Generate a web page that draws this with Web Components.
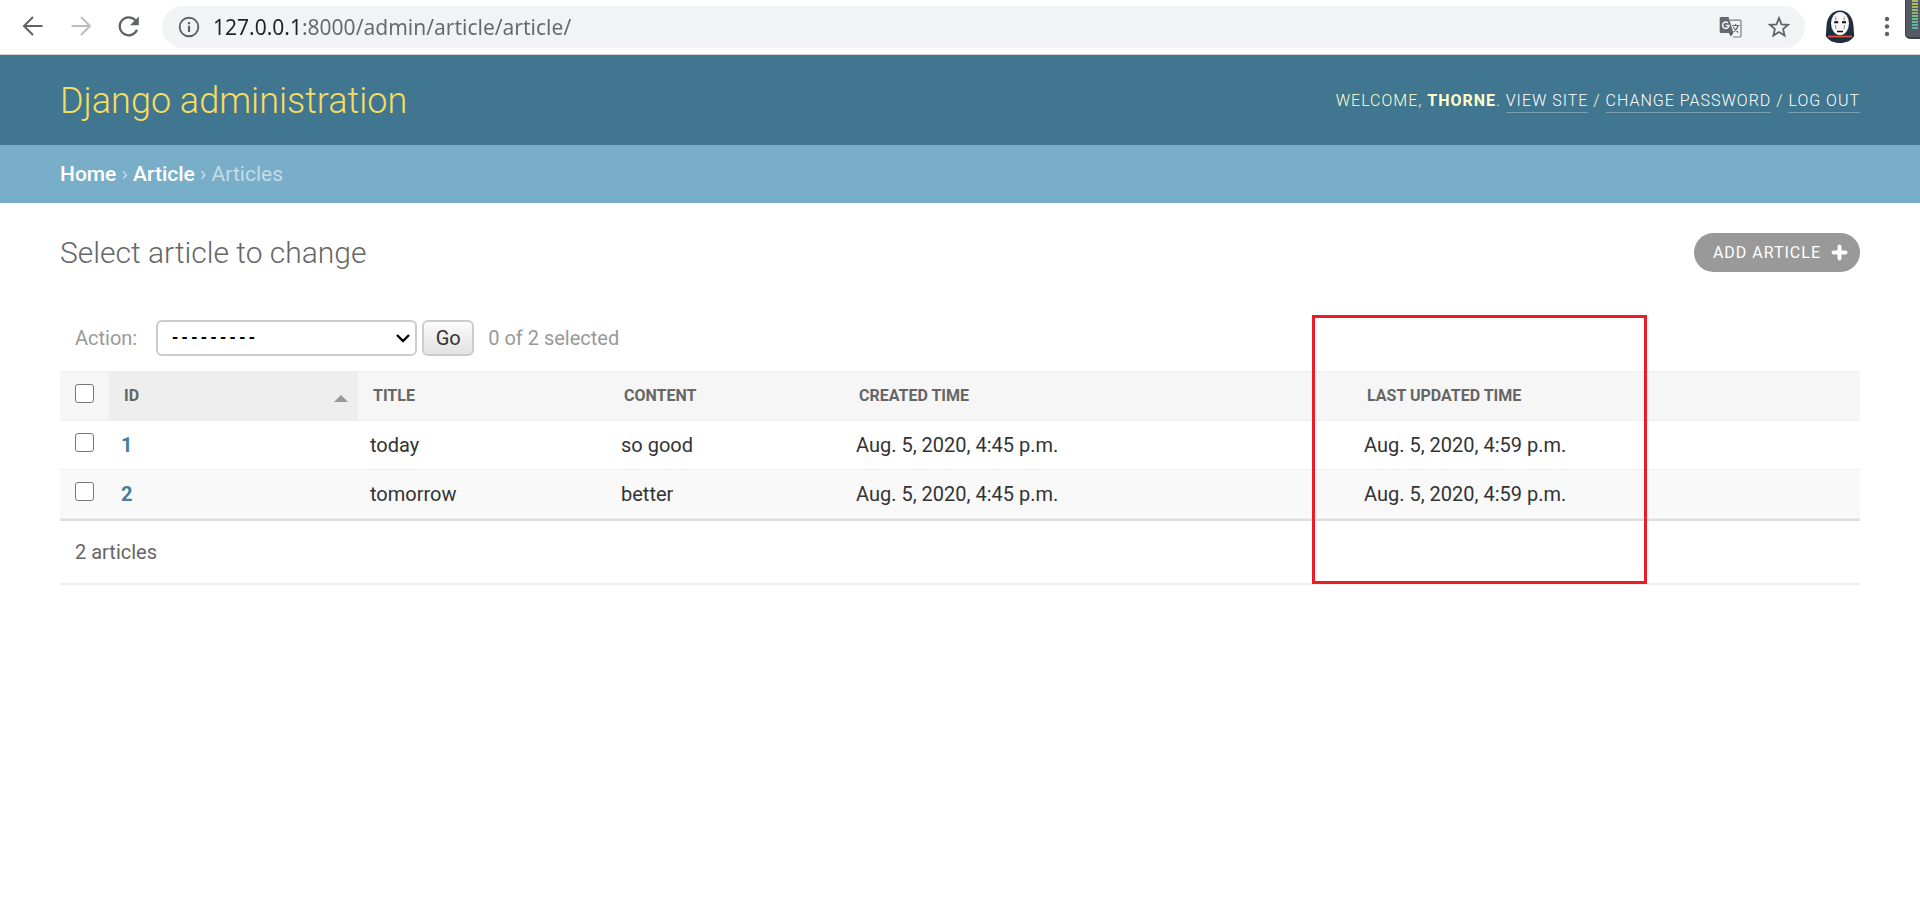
<!DOCTYPE html>
<html lang="en">
<head>
<meta charset="utf-8">
<title>Select article to change | Django site admin</title>
<style>
  body { margin: 0; background: #fff; color: #333; font-family: Roboto, "Liberation Sans", sans-serif; }
</style>
</head>
<body>
<browser-bar></browser-bar>
<admin-header user="thorne">Django administration</admin-header>
<admin-breadcrumbs></admin-breadcrumbs>
<admin-content>
  <span slot="title">Select article to change</span>
  <add-button slot="tools">Add article</add-button>
  <change-list></change-list>
</admin-content>

<script>
class BaseElement extends HTMLElement {
  connectedCallback() {
    if (this.shadowRoot) return;
    this.attachShadow({ mode: 'open' }).innerHTML = this.render();
  }
}

customElements.define('browser-bar', class extends BaseElement {
  render() {
    return `
<style>
  :host { display: flex; align-items: center; height: 54px; border-bottom: 1px solid #d3d3d6; background: #fff; overflow: hidden; }
  button { border: 0; padding: 0; background: none; display: block; width: 24px; height: 24px; flex: none; }
  svg { display: block; }
  nav { display: flex; gap: 24px; padding: 0 21px; }
  .address { flex: 1; display: flex; align-items: center; height: 42px; border-radius: 21px; background: #f1f3f4; padding: 0 14px 0 15px; box-sizing: border-box; gap: 12px; }
  input { flex: 1; min-width: 0; border: 0; padding: 0; height: 32px; outline: 0; font: 21px/32px "Noto Sans", "Open Sans", sans-serif; -webkit-text-fill-color: transparent; background: linear-gradient(90deg, #202124 90px, #65686c 90px); -webkit-background-clip: text; background-clip: text; }
  .actions { display: flex; gap: 24px; }
  .end { display: flex; align-items: center; align-self: stretch; padding-left: 20px; }
  .end button { width: 30px; height: 34px; }
  .end .menu { width: 8px; height: 24px; margin-left: 28px; }
  .meter { align-self: flex-start; margin-left: 14px; }
</style>
<nav aria-label="Browser">
  <button aria-label="Back"><svg width="24" height="24" viewBox="0 0 24 24" fill="none" stroke="#5f6368" stroke-width="2"><path d="M21.500 11H3.500M12 2L3 11l9 9"/></svg></button>
  <button aria-label="Forward" disabled><svg width="24" height="24" viewBox="0 0 24 24" fill="none" stroke="#babcbe" stroke-width="2"><path d="M2.500 11H20.500M12 2l9 9-9 9"/></svg></button>
  <button aria-label="Reload"><svg width="24" height="24" viewBox="0 0 24 24"><path d="M20 14.800A9 9 0 1 1 18.300 5.200" fill="none" stroke="#5f6368" stroke-width="2.200"/><path d="M21.800 1.500v8.800h-8.800z" fill="#5f6368"/></svg></button>
</nav>
<div class="address">
  <svg width="24" height="24" viewBox="0 0 24 24"><circle cx="12" cy="12" r="9.300" fill="none" stroke="#5f6368" stroke-width="1.900"/><path d="M10.900 10.700h2.200v6.300h-2.200zM10.900 7h2.200v2.300h-2.200z" fill="#5f6368"/></svg>
  <input type="text" aria-label="Address" value="127.0.0.1:8000/admin/article/article/">
  <div class="actions">
    <button aria-label="Translate"><svg width="24" height="24" viewBox="0 0 24 24"><path d="M11 5.200h9.700a1.300 1.300 0 0 1 1.300 1.300v14.200a1.300 1.300 0 0 1-1.300 1.300H14" fill="none" stroke="#7b7e82" stroke-width="1.200"/><path d="M2 2h7.500l1.300 4 3.600 12H2a1.300 1.300 0 0 1-1.300-1.300V3.300A1.300 1.300 0 0 1 2 2z" fill="#66696d"/><path d="M10 18h4.400l-2.600 3.500z" fill="#54575b"/><path d="M9 7.900a3.200 3.200 0 1 0 1 2.600H6.800" fill="none" stroke="#f1f3f4" stroke-width="1.500"/><path d="M13 10.500h7.500M16.600 9v1.500M19 10.500c-.600 3-2.500 5.200-4.500 6.500M14.300 12c1.200 2.600 3 4.200 5 5.500" fill="none" stroke="#66696d" stroke-width="1.200"/></svg></button>
    <button aria-label="Bookmark"><svg width="24" height="24" viewBox="0 0 24 24" fill="none" stroke="#5f6368" stroke-width="1.800"><path d="M12 3.200l2.500 6.100 6.600.500-5 4.300 1.500 6.400L12 17.100l-5.600 3.400 1.500-6.400-5-4.300 6.600-.500z"/></svg></button>
  </div>
</div>
<div class="end">
  <button aria-label="Profile"><svg width="30" height="34" viewBox="0 0 30 34"><path d="M15 .500C7 .500 2 7 1.500 16L.800 26C4 31 9 33 15 33s11-2 14.200-7l-.700-10C28 7 23 .500 15 .500z" fill="#202c40"/><path d="M3 26.500h24" stroke="#e8583e" stroke-width="1.600"/><ellipse cx="15" cy="13.500" rx="9" ry="11.500" fill="#f7f5f5"/><path d="M9.200 12.200h4M17 12.200h4" stroke="#111" stroke-width="2"/><path d="M12 21.500h6" stroke="#111" stroke-width="1.500"/><path d="M10.500 6.500l.500 4M19.500 6.500l-.500 4M10.500 15l.500 4M19.500 15l-.500 4" stroke="#aaa6b0" stroke-width="1.300"/></svg></button>
  <button class="menu" aria-label="Menu"><svg width="8" height="24" viewBox="0 0 8 24" fill="#5f6368"><circle cx="4" cy="4" r="2.200"/><circle cx="4" cy="11.500" r="2.200"/><circle cx="4" cy="19" r="2.200"/></svg></button>
  <svg class="meter" width="15" height="40" viewBox="0 0 15 40"><path d="M0 0h15v39H5a5 5 0 0 1-5-5z" fill="#3e4049"/><path d="M1 0h14v37H5a4 4 0 0 1-4-4z" fill="#565963"/><g stroke-width="2"><path d="M7 1h6M7 4h6" stroke="#a9bd57"/><path d="M7 7h6M7 10h6" stroke="#94bd68"/><path d="M7 13h6M7 16h6" stroke="#7dbb7a"/><path d="M7 19h6M7 22h6" stroke="#62bc91"/><path d="M7 25h6M7 28h6" stroke="#4dbda8"/></g></svg>
</div>`;
  }
});

customElements.define('admin-header', class extends BaseElement {
  render() {
    return `
<style>
  :host { display: flex; align-items: center; justify-content: space-between; box-sizing: border-box; height: 90px; padding: 2px 60px 0; background: #417690; color: #ffc; }
  h1 { margin: 0; font-size: 36px; line-height: 48px; font-weight: 300; color: #f5dd5d; }
  div { font-size: 16px; line-height: 24px; font-weight: 300; letter-spacing: 1px; text-transform: uppercase; }
  strong { font-weight: 700; }
  a { color: #fff; text-decoration: none; border-bottom: 1px solid rgba(255, 255, 255, .3); padding-bottom: 2px; }
</style>
<h1><slot></slot></h1>
<div>Welcome, <strong>${this.getAttribute('user')}</strong>. <a href="#site">View site</a> / <a href="#password">Change password</a> / <a href="#logout">Log out</a></div>`;
  }
});

customElements.define('admin-breadcrumbs', class extends BaseElement {
  render() {
    return `
<style>
  :host { display: block; padding: 15px 60px; background: #79aec8; color: #c4dce8; font-size: 21px; line-height: 28px; }
  a { color: #fff; text-decoration: none; font-weight: 500; }
</style>
<nav aria-label="Breadcrumbs"><a href="#home">Home</a> › <a href="#article">Article</a> › Articles</nav>`;
  }
});

customElements.define('admin-content', class extends BaseElement {
  render() {
    return `
<style>
  :host { display: block; padding: 30px 60px; }
  header { display: flex; justify-content: space-between; align-items: flex-start; margin-bottom: 38px; }
  h1 { margin: 0; font-size: 30px; line-height: 40px; font-weight: 300; color: #666; }
</style>
<header><h1><slot name="title"></slot></h1><slot name="tools"></slot></header>
<slot></slot>`;
  }
});

customElements.define('add-button', class extends BaseElement {
  render() {
    return `
<style>
  :host { display: block; }
  a { display: flex; align-items: center; gap: 10px; height: 39px; padding: 0 12px 0 19px; border-radius: 20px; background: #999; color: #fff; font-size: 16px; letter-spacing: 1px; text-transform: uppercase; text-decoration: none; }
  svg { display: block; }
</style>
<a href="#add"><slot></slot><svg width="17" height="18" viewBox="0 0 17 18"><path d="M8.500 2.500v12M2.500 8.500h12" stroke="#fff" stroke-width="4" stroke-linecap="round"/></svg></a>`;
  }
});

customElements.define('change-list', class extends BaseElement {
  render() {
    const rows = [
      ['1', 'today', 'so good', 'Aug. 5, 2020, 4:45 p.m.', 'Aug. 5, 2020, 4:59 p.m.'],
      ['2', 'tomorrow', 'better', 'Aug. 5, 2020, 4:45 p.m.', 'Aug. 5, 2020, 4:59 p.m.'],
    ];
    return `
<style>
  :host { display: block; position: relative; font-size: 20px; }
  .actions { display: flex; align-items: center; padding: 9px 15px 15px; color: #999; line-height: 36px; }
  .actions label { margin-right: 19px; }
  select { appearance: none; width: 261px; height: 36px; border: 2px solid #ccc; border-radius: 6px; padding: 0 12px; font: 700 16px "Liberation Mono", monospace; color: #000; background: #fff url("data:image/svg+xml,%3Csvg xmlns='http://www.w3.org/2000/svg' width='14' height='10'%3E%3Cpath d='M1 2l6 6 6-6' fill='none' stroke='%23000' stroke-width='2.400'/%3E%3C/svg%3E") no-repeat right 5px center; }
  .actions button { width: 52px; height: 36px; margin: 0 14px 0 5px; border: 2px solid #ccc; border-radius: 6px; padding: 0; font: 20px Roboto, sans-serif; color: #333; background: linear-gradient(#fbfbfb, #e2e2e2); }
  table { width: 100%; table-layout: fixed; border-collapse: separate; border-spacing: 0; border-bottom: 2px solid #ddd; }
  th, td { box-sizing: border-box; height: 49px; padding: 0 12px; border-bottom: 1px solid #eee; text-align: left; font-weight: 400; line-height: 24px; }
  thead th { height: 50px; padding: 0 15px; border-top: 1px solid #eee; background: #f6f6f6; color: #666; font-size: 16px; font-weight: 700; text-transform: uppercase; }
  thead .sorted { background: #eee; }
  .sorted div { display: flex; align-items: center; justify-content: space-between; margin-right: -5px; }
  .sorted i { border: 7px solid transparent; border-top: 0; border-bottom-color: #999; margin-top: 4px; }
  tbody tr:nth-child(even) > * { background: #f9f9f9; }
  tbody th a { color: #447e9b; font-weight: 700; text-decoration: none; }
  .check { padding: 0 15px; }
  .check input { display: block; width: 19px; height: 19px; margin: 0 0 5px; appearance: none; border: 1px solid #767676; border-radius: 3px; background: #fff; }
  .c0 { width: 49px; } .c1 { width: 249px; } .c2 { width: 251px; } .c3 { width: 235px; } .c4 { width: 508px; }
  p { margin: 0; padding: 18px 15px; border-bottom: 2px solid #eee; line-height: 26px; color: #666; }
  .highlight { position: absolute; right: 213px; top: 4px; bottom: 1px; width: 335px; box-sizing: border-box; border: 3px solid #ed1c24; pointer-events: none; }
</style>
<div class="actions">
  <label for="action">Action:</label>
  <select id="action"><option>---------</option><option>Delete selected articles</option></select>
  <button type="button">Go</button>
  <span>0 of 2 selected</span>
</div>
<table>
  <colgroup><col class="c0"><col class="c1"><col class="c2"><col class="c3"><col class="c4"><col></colgroup>
  <thead><tr>
    <th class="check"><input type="checkbox" aria-label="Select all articles"></th>
    <th class="sorted" aria-sort="ascending"><div>ID<i></i></div></th>
    <th>Title</th><th>Content</th><th>Created time</th><th>Last updated time</th>
  </tr></thead>
  <tbody>${rows.map(([id, ...cells]) => `<tr>
    <td class="check"><input type="checkbox" aria-label="Select article ${id}"></td>
    <th scope="row"><a href="#${id}">${id}</a></th>${cells.map(c => `<td>${c}</td>`).join('')}</tr>`).join('')}</tbody>
</table>
<p>2 articles</p>
<div class="highlight"></div>`;
  }
});
</script>
</body>
</html>
